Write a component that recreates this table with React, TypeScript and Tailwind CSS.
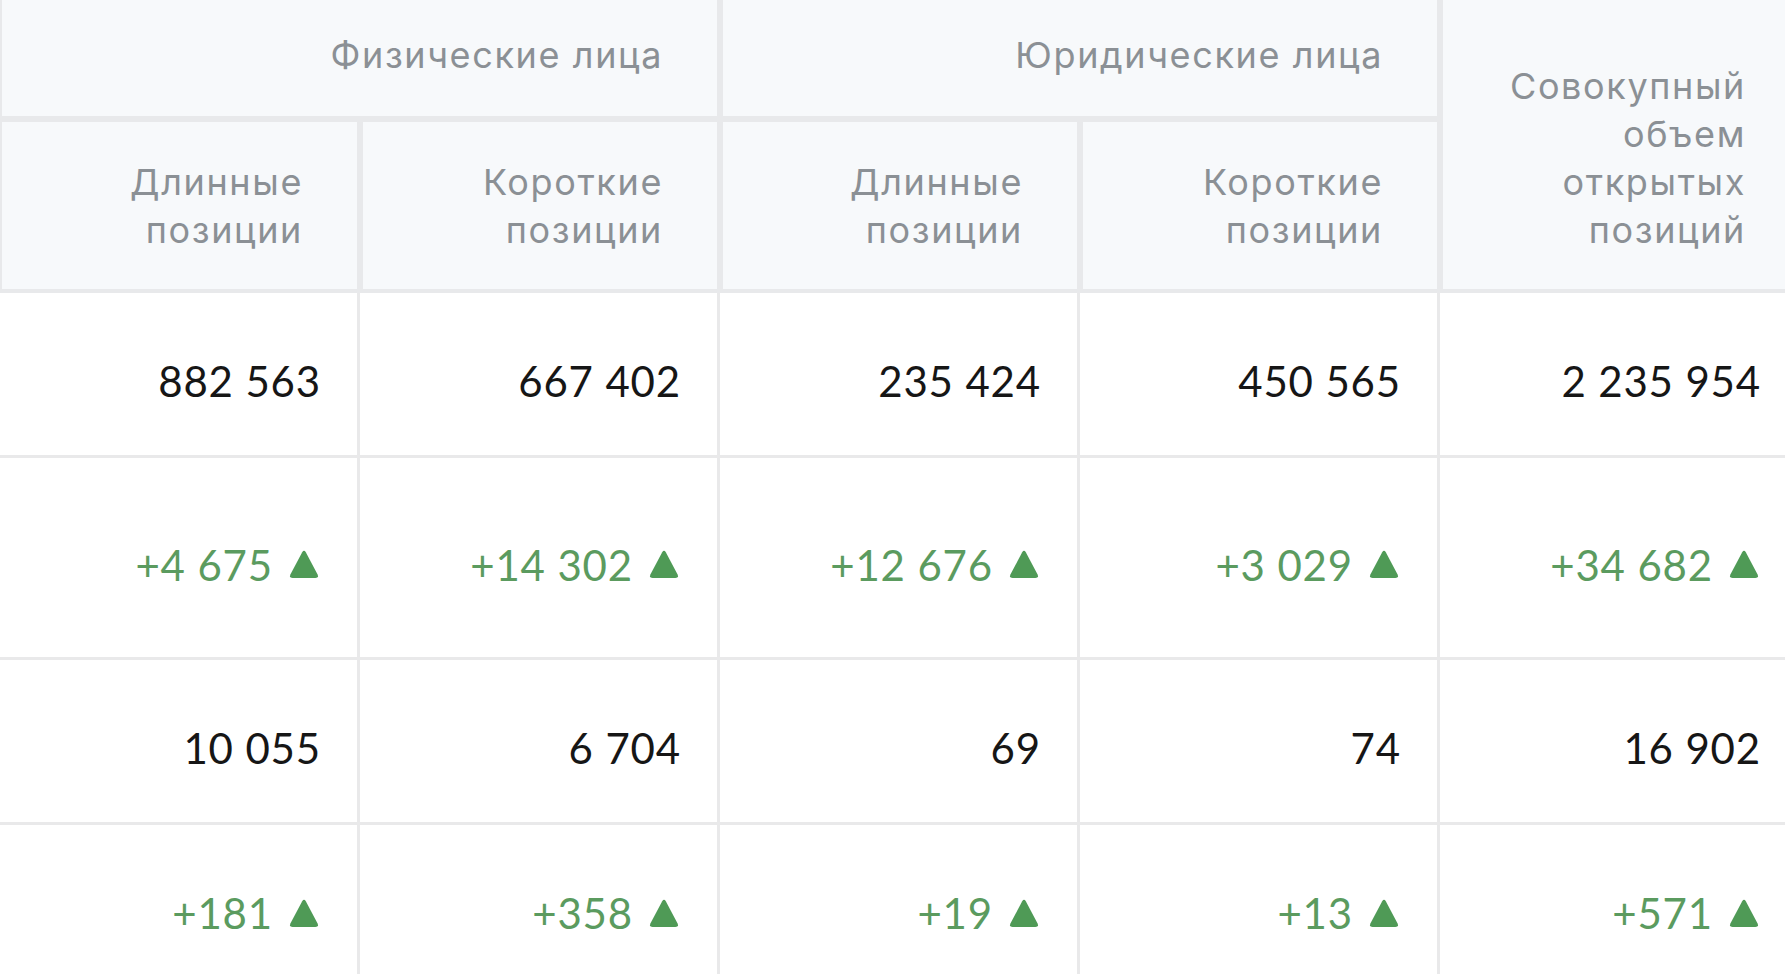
const headFont = { fontFamily: "Inter, 'Noto Sans', sans-serif" };
const numFont = { fontFamily: "Lato, 'Noto Sans', sans-serif" };

const rows: { cells: string[]; delta: boolean; tall: boolean }[] = [
  { delta: false, tall: false, cells: ["882 563", "667 402", "235 424", "450 565", "2 235 954"] },
  { delta: true, tall: true, cells: ["+4 675", "+14 302", "+12 676", "+3 029", "+34 682"] },
  { delta: false, tall: false, cells: ["10 055", "6 704", "69", "74", "16 902"] },
  { delta: true, tall: false, cells: ["+181", "+358", "+19", "+13", "+571"] },
];

const Up = () => (
  <svg width="30" height="29" viewBox="0 0 30 29" className="shrink-0">
    <path d="M13.2 2.2 Q15 -0.6 16.8 2.2 L28.6 24.6 Q30 28 26.4 28 L3.6 28 Q0 28 1.4 24.6 Z" fill="#4f9a56" />
  </svg>
);

const HeadCell = ({ lines, className }: { lines: string[]; className: string }) => (
  <div className={"bg-[#f7f9fb] flex items-end justify-end text-right pr-[54px] " + className}>
    <div className="text-[36px] leading-[48px] tracking-[0.045em] text-[#8b9095]" style={headFont}>
      {lines.map((l) => (
        <div key={l}>{l}</div>
      ))}
    </div>
  </div>
);

export default function App() {
  return (
    <div className="w-[1785px] h-[974px] overflow-hidden bg-white">
      <div className="w-[1800px]">
        {/* Header */}
        <div className="flex gap-[6px] bg-[#e8e9eb] pl-[2px] border-b-[4px] border-[#e8e9eb]">
          <div className="flex flex-col gap-[6px] w-[715px]">
            <HeadCell lines={["Физические лица"]} className="h-[116px] pb-[37px]" />
            <div className="flex gap-[6px]">
              <HeadCell lines={["Длинные", "позиции"]} className="w-[355px] h-[167px] pb-[35px]" />
              <HeadCell lines={["Короткие", "позиции"]} className="w-[354px] h-[167px] pb-[35px]" />
            </div>
          </div>
          <div className="flex flex-col gap-[6px] w-[714px]">
            <HeadCell lines={["Юридические лица"]} className="h-[116px] pb-[37px]" />
            <div className="flex gap-[6px]">
              <HeadCell lines={["Длинные", "позиции"]} className="w-[354px] h-[167px] pb-[35px]" />
              <HeadCell lines={["Короткие", "позиции"]} className="w-[354px] h-[167px] pb-[35px]" />
            </div>
          </div>
          <HeadCell
            lines={["Совокупный", "объем", "открытых", "позиций"]}
            className="flex-1 h-[289px] pb-[35px]"
          />
        </div>

        {/* Body */}
        {rows.map((row, i) => (
          <div
            key={i}
            className={"flex border-b-[3px] border-[#e9e9ea] " + (row.tall ? "h-[202px]" : "h-[165px]")}
          >
            {row.cells.map((v, j) => (
              <div
                key={j}
                className={
                  "w-[360px] border-r-[3px] border-[#e9e9ea] flex items-center justify-end pt-[14px] " +
                  (row.delta ? "pr-[38px]" : "pr-[36px]")
                }
                style={numFont}
              >
                {row.delta ? (
                  <div className="flex items-center gap-[16px] text-[42px] leading-none tracking-[0.02em] text-[#5b9b5f]">
                    <span>{v}</span>
                    <Up />
                  </div>
                ) : (
                  <span className="text-[42px] leading-none tracking-[0.02em] text-[#161616]">{v}</span>
                )}
              </div>
            ))}
          </div>
        ))}
      </div>
    </div>
  );
}
